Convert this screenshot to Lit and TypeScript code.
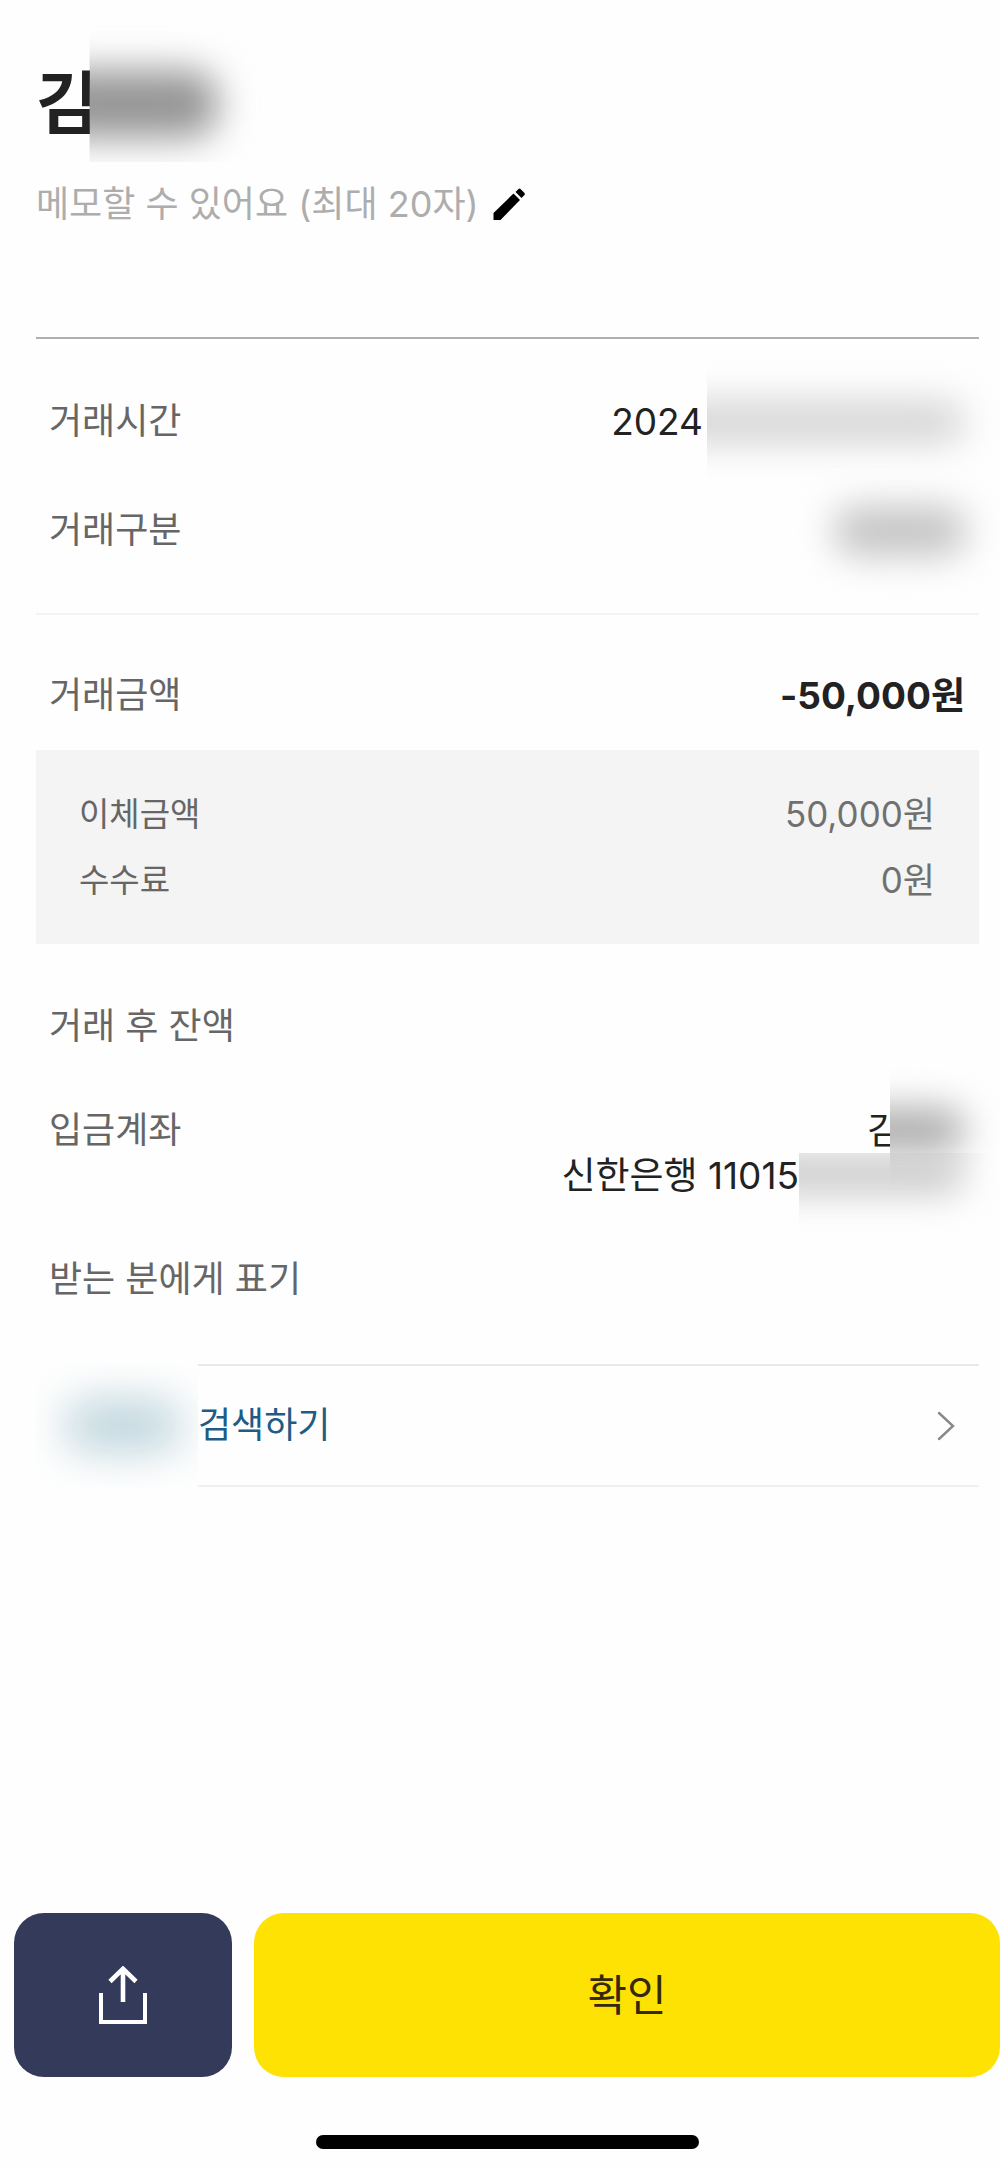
import { LitElement, html, css, svg } from "lit";
import { customElement } from "lit/decorators.js";

const pencilIcon = svg`
  <path d="M0.500 32V25L20.500 5.500L27 12L7.500 32Z" fill="#000" />
  <path d="M22.500 4L25.500 1Q26.500 0 27.500 1L31.500 5Q32.300 6 31.500 7L28.500 10Z" fill="#000" />`;

const shareIcon = svg`
  <path d="M2 27V56H46V27" fill="none" stroke="#fff" stroke-width="4" />
  <path d="M24 36V3M11 15.500L24 2.800L37 15.500" fill="none" stroke="#fff" stroke-width="4.600" />`;

@customElement("app-root")
export class AppRoot extends LitElement {
  static styles = css`
    :host {
      display: block;
      font-family: Inter, "Noto Sans CJK KR", sans-serif;
      color: #222;
      background: #fefefe;
    }
    .page {
      display: flex;
      flex-direction: column;
      min-height: 100vh;
    }
    .content {
      flex: 1;
      padding: 58px 21px 0 36px;
    }
    button {
      font: inherit;
      border: 0;
      padding: 0;
      cursor: pointer;
    }
    .head {
      padding-bottom: 103px;
      border-bottom: 2px solid #b0b0b0;
    }
    .title {
      display: flex;
      margin: 0 0 26px;
      font-size: 68px;
      line-height: 90px;
      font-weight: 700;
    }
    .memo {
      display: flex;
      align-items: center;
      gap: 14px;
      background: none;
      color: #adadad;
      font-size: 36px;
      line-height: 60px;
    }
    .pencil {
      width: 33px;
      height: 33px;
    }

    /* Privacy masks: a soft blob with a hard left edge */
    .mask {
      position: relative;
      flex: none;
      clip-path: inset(-60px -60px -60px 0);
    }
    .mask::before {
      content: "";
      position: absolute;
      inset: 0;
      border-radius: 28px;
      filter: blur(18px);
    }
    .mask-title {
      width: 130px;
      height: 90px;
      margin-left: -9px;
      background: #fefefe;
      clip-path: inset(-36px -60px -14px 0);
    }
    .mask-title::before {
      inset: 12px 2px 10px -50px;
      background: #969696;
    }
    .mask-date {
      width: 258px;
      height: 54px;
    }
    .mask-date::before {
      inset: 6px 0 6px -50px;
      background: #d4d4d4;
    }
    .mask-kind {
      width: 136px;
      height: 54px;
      clip-path: none;
    }
    .mask-kind::before {
      inset: 2px -2px 2px 4px;
      background: #c4c4c4;
    }
    .mask-owner {
      width: 75px;
      height: 45px;
      margin-left: -11px;
      background: #fefefe;
      clip-path: inset(-40px -60px -60px 0);
    }
    .mask-owner::before {
      inset: 0 0 0 -50px;
      background: #acacac;
    }
    .mask-account {
      width: 166px;
      height: 45px;
      clip-path: inset(0 -60px -60px 0);
    }
    .mask-account::before {
      inset: 0 0 4px -50px;
      background: #cbcbcb;
    }
    .mask-link {
      width: 162px;
      align-self: stretch;
      clip-path: inset(0);
    }
    .mask-link::before {
      inset: 36px 16px 36px 28px;
      background: #bdd4dc;
      filter: blur(22px);
    }

    .group {
      margin: 0;
      padding: 28px 0;
      border-bottom: 2px solid #f3f3f3;
    }
    .row {
      display: flex;
      justify-content: space-between;
      padding: 0 14px 0 13px;
      font-size: 36px;
      line-height: 45px;
    }
    .tall {
      align-items: center;
      min-height: 109px;
    }
    dl,
    dd {
      margin: 0;
    }
    dt {
      color: #666;
    }
    dd {
      font-size: 37px;
    }
    .value {
      display: flex;
      align-items: center;
      gap: 4px;
    }
    .amount {
      font-weight: 700;
    }
    .amounts {
      padding-top: 26px;
    }
    .detail {
      padding: 31px 30px;
      background: #f4f4f4;
    }
    .detail .row {
      font-size: 33px;
      line-height: 66px;
      color: #707070;
    }
    .detail dd {
      font-size: 35px;
    }
    .after {
      display: flex;
      flex-direction: column;
      gap: 59px;
      padding: 60px 0 62px;
    }
    .stack {
      display: flex;
      flex-direction: column;
      align-items: flex-end;
    }
    .line {
      display: flex;
    }
    .search {
      display: flex;
      align-items: center;
      color: #1f5c85;
      text-decoration: none;
      font-size: 36px;
    }
    .search-body {
      flex: 1;
      display: flex;
      align-items: center;
      justify-content: space-between;
      padding-right: 24px;
      border-top: 2px solid #e9e9e9;
      border-bottom: 2px solid #f0f0f0;
      line-height: 119px;
    }
    .chevron {
      width: 18px;
      height: 30px;
    }
    .actions {
      display: grid;
      grid-template-columns: 218px 1fr;
      gap: 22px;
      padding-left: 14px;
    }
    .action {
      display: flex;
      align-items: center;
      justify-content: center;
      height: 164px;
      border-radius: 30px;
    }
    .share {
      background: #343a5a;
    }
    .share svg {
      width: 48px;
      height: 58px;
    }
    .confirm {
      padding-bottom: 6px;
      background: #fee204;
      color: #35290a;
      font-size: 43px;
    }
    .home {
      width: 383px;
      height: 14px;
      margin: 58px auto 18px;
      border-radius: 7px;
      background: #000;
    }
    .home-wrap {
      padding-left: 15px;
    }
  `;

  render() {
    return html`
      <main class="page">
        <div class="content">
          <header class="head">
            <h1 class="title">
              <span>김</span><span class="mask mask-title"></span>
            </h1>
            <button class="memo" type="button">
              메모할 수 있어요 (최대 20자)
              <svg class="pencil" viewBox="0 0 33 33" aria-hidden="true">${pencilIcon}</svg>
            </button>
          </header>

          <dl class="group">
            <div class="row tall">
              <dt>거래시간</dt>
              <dd class="value">2024<span class="mask mask-date"></span></dd>
            </div>
            <div class="row tall">
              <dt>거래구분</dt>
              <dd class="value"><span class="mask mask-kind"></span></dd>
            </div>
          </dl>

          <dl class="amounts">
            <div class="row tall">
              <dt>거래금액</dt>
              <dd class="amount">-50,000원</dd>
            </div>
          </dl>
          <dl class="detail">
            <div class="row"><dt>이체금액</dt><dd>50,000원</dd></div>
            <div class="row"><dt>수수료</dt><dd>0원</dd></div>
          </dl>

          <dl class="after">
            <div class="row"><dt>거래 후 잔액</dt><dd></dd></div>
            <div class="row">
              <dt>입금계좌</dt>
              <dd class="stack">
                <span class="line"><span>김</span><span class="mask mask-owner"></span></span>
                <span class="line">신한은행 11015<span class="mask mask-account"></span></span>
              </dd>
            </div>
            <div class="row"><dt>받는 분에게 표기</dt><dd></dd></div>
          </dl>

          <a class="search" href="#search">
            <span class="mask mask-link"></span>
            <span class="search-body">
              검색하기
              <svg class="chevron" viewBox="0 0 18 30" aria-hidden="true">
                <path d="M2 2L16 15L2 28" fill="none" stroke="#888" stroke-width="2.400" stroke-linecap="round" />
              </svg>
            </span>
          </a>
        </div>

        <div class="actions">
          <button class="action share" type="button" aria-label="공유">
            <svg viewBox="0 0 48 58" aria-hidden="true">${shareIcon}</svg>
          </button>
          <button class="action confirm" type="button">확인</button>
        </div>
        <div class="home-wrap"><div class="home"></div></div>
      </main>
    `;
  }
}
